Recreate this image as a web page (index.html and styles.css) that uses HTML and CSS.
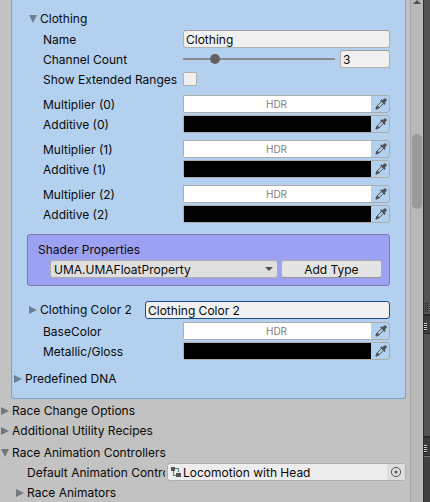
FILE: index.html
```html
<!DOCTYPE html>
<html lang="en">
<head>
<meta charset="utf-8">
<title>Race Inspector</title>
<link rel="stylesheet" href="styles.css">
</head>
<body>
<svg class="defs" aria-hidden="true">
  <symbol id="dropper" viewBox="0 0 12 12">
    <path fill="#505254" d="M7.300 2.200 9 .7q1-.9 2.200.2t.2 2.200L9.800 4.700l.9 1-1.200 1.200L5.100 2.500l1.200-1.200z"/>
    <path fill="none" stroke="#505254" d="M6.300 3.800 1.900 8.200l-.4 2.300 2.300-.4L8.200 5.700"/>
    <path fill="#505254" d="m2.400 7.600 2 2-1.500 1.200-1.600.9-1-1 .9-1.600z"/>
  </symbol>
  <symbol id="open" viewBox="0 0 8 8"><path d="M0 0h8L4 8z"/></symbol>
  <symbol id="closed" viewBox="0 0 8 8"><path d="M0 0v8l8-4z"/></symbol>
</svg>
<div class="app">
  <main class="inspector">
    <section class="panel">
      <button class="foldout inset"><svg><use href="#open"/></svg>Clothing</button>
      <div class="row"><label for="name">Name</label><input id="name" class="field" type="text" value="Clothing"></div>
      <div class="row"><label for="count">Channel Count</label>
        <div class="slider"><input id="count" type="range" min="0" max="16" value="3"><input class="field" type="text" value="3" aria-label="Channel count value"></div></div>
      <div class="row"><label for="ranges">Show Extended Ranges</label><input id="ranges" class="check" type="checkbox"></div>

      <div class="channel">
        <div class="row"><label for="m0">Multiplier (0)</label><button id="m0" class="color"><span class="swatch">HDR</span><svg><use href="#dropper"/></svg></button></div>
        <div class="row"><label for="a0">Additive (0)</label><button id="a0" class="color"><span class="swatch black"></span><svg><use href="#dropper"/></svg></button></div>
      </div>
      <div class="channel">
        <div class="row"><label for="m1">Multiplier (1)</label><button id="m1" class="color"><span class="swatch">HDR</span><svg><use href="#dropper"/></svg></button></div>
        <div class="row"><label for="a1">Additive (1)</label><button id="a1" class="color"><span class="swatch black"></span><svg><use href="#dropper"/></svg></button></div>
      </div>
      <div class="channel">
        <div class="row"><label for="m2">Multiplier (2)</label><button id="m2" class="color"><span class="swatch">HDR</span><svg><use href="#dropper"/></svg></button></div>
        <div class="row"><label for="a2">Additive (2)</label><button id="a2" class="color"><span class="swatch black"></span><svg><use href="#dropper"/></svg></button></div>
      </div>

      <section class="shader">
        <label for="property">Shader Properties</label>
        <div class="shader-controls">
          <div class="dropdown">
            <select id="property"><option>UMA.UMAFloatProperty</option></select>
            <svg viewBox="0 0 8 4"><path d="M0 0h8L4 4z"/></svg>
          </div>
          <button class="add">Add Type</button>
        </div>
      </section>

      <div class="row titled">
        <button class="foldout"><svg><use href="#closed"/></svg>Clothing Color 2</button>
        <input class="field focused" type="text" value="Clothing Color 2" aria-label="Color name">
      </div>
      <div class="row"><label for="base">BaseColor</label><button id="base" class="color"><span class="swatch">HDR</span><svg><use href="#dropper"/></svg></button></div>
      <div class="row"><label for="gloss">Metallic/Gloss</label><button id="gloss" class="color"><span class="swatch black"></span><svg><use href="#dropper"/></svg></button></div>
      <button class="foldout predefined"><svg><use href="#closed"/></svg>Predefined DNA</button>
    </section>

    <section class="sections">
      <button class="foldout"><svg><use href="#closed"/></svg>Race Change Options</button>
      <button class="foldout"><svg><use href="#closed"/></svg>Additional Utility Recipes</button>
      <button class="foldout controllers"><svg><use href="#open"/></svg>Race Animation Controllers</button>
      <div class="object-row">
        <label for="controller">Default Animation Controller</label>
        <div class="object">
          <svg class="graph" viewBox="0 0 12 12"><path fill="none" stroke="#3f8489" d="M5 2.500h3.500V6M3.500 5v4.500H6"/><path fill="#555" d="M1 1h4v4H1zM6 7h5v4H6z"/></svg>
          <input id="controller" type="text" value="Locomotion with Head" readonly>
          <button class="picker" aria-label="Select object"><svg viewBox="0 0 12 12"><circle cx="6" cy="6" r="4.600" fill="none" stroke="#555"/><circle cx="6" cy="6" r="1.500" fill="#555"/></svg></button>
        </div>
      </div>
      <button class="foldout animators"><svg><use href="#closed"/></svg>Race Animators</button>
    </section>
  </main>
  <div class="scrollbar"><svg viewBox="0 0 8 4"><path d="M0 4h8L4 0z"/></svg><div class="thumb"></div></div>
  <aside class="dock">
    <div class="pane first"><span class="dots"></span></div>
    <div class="tab"><span class="grip"></span></div>
    <div class="pane second"></div>
    <div class="tab"><span class="grip"></span></div>
    <div class="pane last"></div>
  </aside>
</div>
</body>
</html>
```
FILE: styles.css
```css
* { box-sizing: border-box; }
body { margin: 0; background: #c2c2c2; color: #090909; }
body, button, input, select { font: 12px/18px Inter, "Liberation Sans", sans-serif; }
button, input, select { margin: 0; padding: 0; color: inherit; }
button { border: 0; background: none; }
svg { display: block; flex: none; }
.defs { position: absolute; width: 0; height: 0; }

.app { display: flex; height: 100vh; overflow: hidden; }
.inspector { flex: 1; min-width: 0; padding: 0 4px 0 0; }

.panel {
  margin-left: 11px;
  padding: 10px 15px 10px 0;
  border: solid #7f9fc3;
  border-width: 0 1px 1px;
  border-radius: 0 0 3px 3px;
  background: #b3d1ef;
}
.row {
  display: grid;
  grid-template-columns: 140px minmax(0, 1fr);
  align-items: center;
  height: 18px;
  margin: 0 0 2px 31px;
  white-space: nowrap;
}
.row > label { padding-top: 2px; }
.foldout { display: flex; align-items: center; gap: 3px; height: 18px; margin-bottom: 2px; white-space: nowrap; }
.foldout svg { width: 8px; height: 8px; fill: #737779; }
.panel .foldout svg { fill: #6c8094; }
.panel .inset { margin: 0 0 1px 17px; }

.field {
  width: 100%;
  min-width: 0;
  height: 18px;
  padding: 1px 2px 0;
  border: 1px solid #b0b0b0;
  border-top-color: #a0a0a0;
  border-radius: 3px;
  background: #f0f0f0;
}
.slider { display: grid; grid-template-columns: minmax(0, 1fr) 50px; gap: 5px; align-items: center; }
.slider input[type="range"] { appearance: none; width: 100%; height: 18px; background: none; }
.slider input::-webkit-slider-runnable-track { height: 2px; background: #8b8b8b; }
.slider input::-webkit-slider-thumb { appearance: none; width: 10px; height: 10px; margin-top: -4px; border-radius: 50%; background: #616161; }
.check { appearance: none; width: 14px; height: 14px; border: 1px solid #b0b0b0; border-radius: 2px; background: #f0f0f0; }

.channel { margin-top: 7px; }
.color { display: flex; height: 18px; border: 1px solid #acacac; border-radius: 0 3px 3px 3px; }
.swatch { flex: 1; height: 16px; padding-right: 2px; background: #fff; color: #808080; font-size: 10px; line-height: 17px; text-align: center; }
.black { background: #000; }
.color svg { width: 12px; height: 12px; margin: 2px 2px 2px 4px; }

.shader { margin: 12px 0 15px 15px; padding: 5px 7px 7px 10px; border: 1px solid #7879b5; border-radius: 3px; background: #9da1f1; }
.shader > label { display: block; height: 20px; line-height: 20px; }
.shader-controls { display: grid; grid-template-columns: minmax(0, 9fr) minmax(0, 4fr); gap: 3px; padding-left: 12px; }
.dropdown { position: relative; }
.dropdown select { appearance: none; display: block; width: 100%; height: 18px; padding: 0 3px; border: 1px solid #adadad; border-radius: 3px; background: #dfdfdf; }
.dropdown svg { position: absolute; top: 7px; right: 5px; width: 8px; height: 4px; fill: #505050; }
.add { height: 18px; border: 1px solid #adadad; border-bottom-color: #949494; border-radius: 3px; background: #e4e4e4; line-height: 18px; }

.titled { grid-template-columns: 116px minmax(0, 1fr); margin-left: 17px; }
.titled .foldout { margin: 0; }
.focused { border-color: #1d5087; }
.predefined { margin: 11px 0 0 2px; }

.sections { padding: 3px 0 0 1px; }
.sections .controllers { margin: 4px 0 1px; }
.object-row { display: grid; grid-template-columns: 138px minmax(0, 1fr); gap: 2px; height: 18px; margin: 0 0 3px 26px; }
.object-row label { overflow: hidden; line-height: 20px; white-space: nowrap; }
.object { display: flex; align-items: center; height: 18px; border: 1px solid #b0b0b0; border-radius: 3px; background: #ededed; }
.graph { width: 12px; height: 12px; margin-left: 2px; }
.object input { flex: 1; min-width: 0; height: 16px; padding: 1px 0 0 1px; border: 0; background: none; }
.picker { width: 18px; height: 16px; padding: 2px 3px; background: #dedede; }
.picker svg { width: 12px; height: 12px; }
.animators { margin-left: 15px; }

.scrollbar { flex: none; display: flex; flex-direction: column; width: 13px; padding: 0 1px; border-left: 1px solid #a5a5a5; background: #b8b8b8; }
.scrollbar svg { width: 8px; height: 4px; margin-left: 1px; fill: #505050; }
.thumb { height: 75px; margin-top: 130px; border-radius: 5px; background: #9a9a9a; }

.dock { flex: none; display: flex; flex-direction: column; width: 7px; border-left: 1px solid #303030; background: #535353; }
.pane { flex: none; }
.first { height: 314px; padding: 10px 1px 0; display: flex; align-items: flex-end; }
.dots { width: 5px; height: 10px; margin-bottom: 1px; background: repeating-linear-gradient(#0000 0 1px, #535353 1px 2px), repeating-linear-gradient(90deg, #202020 0 1px, #535353 1px 2px); }
.tab { flex: none; height: 20px; padding: 7px 0; border: solid #292929; border-width: 2px 0 1px; background: #3c3c3c; }
.grip { display: block; width: 3px; height: 8px; background: repeating-linear-gradient(#d0d0d0 0 1px, #222 1px 2px); }
.second { height: 102px; }
.last { flex: 1; border-top: 1px solid #777; background: #414141; }
```
